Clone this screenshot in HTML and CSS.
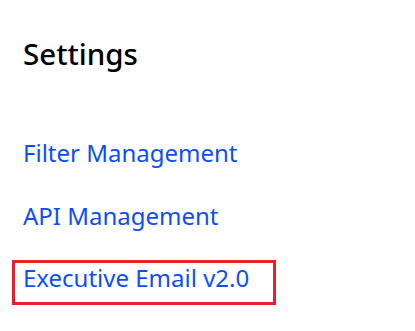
FILE: index.html
```html
<!DOCTYPE html>
<html lang="en">
<head>
  <meta charset="UTF-8" />
  <meta name="viewport" content="width=device-width, initial-scale=1.0" />
  <title>Settings</title>
  <link rel="stylesheet" href="styles.css">
</head>
<body>
  <div class="settings">
    <h1>Settings</h1>
    <ul class="links">
      <li><a href="#">Filter Management</a></li>
      <li><a href="#">API Management</a></li>
      <li class="active"><a href="#">Executive Email v2.0</a></li>
    </ul>
  </div>
</body>
</html>
```

FILE: styles.css
```css
body {
  font-family: "Noto Sans", "Open Sans", Arial, sans-serif;
  background-color: #fff;
  margin: 0;
  padding: 0;
}
.settings {
  padding: 34px 12px 0 12px;
}
.settings h1 {
  margin: 0 0 0 11px;
  font-size: 29.5px;
  font-weight: 500;
  color: #000;
  line-height: 40px;
}
.links {
  list-style: none;
  margin: 61px 0 0 0;
  padding: 0;
  display: flex;
  flex-direction: column;
  align-items: flex-start;
  gap: 17.5px;
}
.links a {
  display: block;
  padding: 0 24px 10px 8px;
  border: 3px solid transparent;
  font-size: 24px;
  line-height: 29px;
  color: #0d4ff5;
  text-decoration: none;
}
.links li.active a {
  border-color: #e8202a;
}
```
